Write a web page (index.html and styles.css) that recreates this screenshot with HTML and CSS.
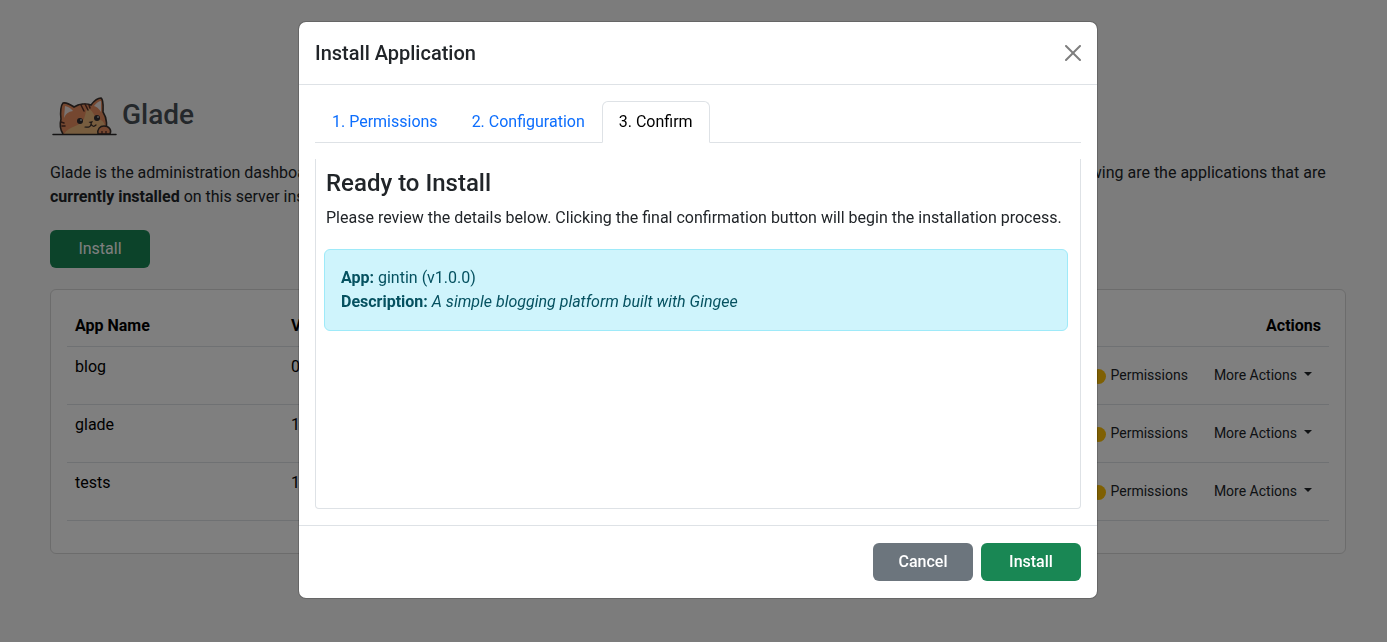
FILE: index.html
```html
<!DOCTYPE html>
<html lang="en">
<head>
<meta charset="utf-8">
<meta name="viewport" content="width=device-width, initial-scale=1">
<title>Glade</title>
<link rel="stylesheet" href="styles.css">
</head>
<body>
<main class="page">
  <header class="brand">
    <svg class="brand-logo" viewBox="0 0 70 50" aria-hidden="true">
      <path d="M13 44C9 38 10 33 11 29C10 22 11 15 13 13C17 12 21 15 24 17C29 14 36 13 41 15C44 11 48 8 51 8C54 10 53 19 53 22C57 28 58 37 54 44Z" fill="#ea8f60"/>
      <path d="M14 44C20 35 30 37 34 29L37 18C40 18 44 23 46 29C53 29 57 34 54 44Z" fill="#efba7f"/>
      <path d="M14 28L15 16Q20 17 23 21Q16 22 14 28ZM44 16Q48 11 51 11L51 22Q48 17 44 16Z" fill="#f5e8e4"/>
      <path d="M13 44C9 38 10 33 11 29C10 22 11 15 13 13C17 12 21 15 24 17C29 14 36 13 41 15C44 11 48 8 51 8C54 10 53 19 53 22C57 28 58 37 54 44" fill="none" stroke="#3b302c" stroke-width="1.6"/>
      <path d="M31 15L34 21M35 14L38 20M39 15L40 18M11 32L14 33M12 36L15 36" fill="none" stroke="#583029" stroke-width="1.5" stroke-linecap="round"/>
      <circle cx="30" cy="31" r="3" fill="#302c30"/>
      <circle cx="47" cy="28" r="3" fill="#302c30"/>
      <circle cx="31" cy="30" r="1" fill="#aaa"/>
      <circle cx="48" cy="27" r="1" fill="#aaa"/>
      <path d="M38.500 32L43 31L41.500 34Z" fill="#3b302c"/>
      <path d="M41 34Q41 38 35 37M41 34Q43 38 46 35" fill="none" stroke="#3b302c" stroke-width="1.2" stroke-linecap="round"/>
      <path d="M48 44C47 39 50 36 54 36C59 36 62 40 60 44Z" fill="#ea8f60" stroke="#3b302c" stroke-width="1.5"/>
      <path d="M52 44V41M56 44V41" stroke="#58302a" stroke-width="1.3"/>
      <path d="M3 44.500H66" stroke="#2b292a" stroke-width="1.5" stroke-linecap="round"/>
    </svg>
    <h1 class="brand-name">Glade</h1>
  </header>
  <p class="intro">Glade is the administration dashboard for the Gingee application server. You can use it to easily install, upgrade and manage applications. The following are the applications that are <strong>currently installed</strong> on this server instance.</p>
  <button class="btn btn-success btn-page" type="button">Install</button>
  <section class="card">
    <table class="apps">
      <thead>
        <tr><th class="col-name" scope="col">App Name</th><th scope="col">Version</th><th class="col-actions" scope="col">Actions</th></tr>
      </thead>
      <tbody>
        <tr><td>blog</td><td>0.0.1</td><td><div class="actions"><button class="btn-sm" type="button"><span class="dot"></span>Permissions</button><button class="btn-sm" type="button">More Actions<span class="caret"></span></button></div></td></tr>
        <tr><td>glade</td><td>1.0.0</td><td><div class="actions"><button class="btn-sm" type="button"><span class="dot"></span>Permissions</button><button class="btn-sm" type="button">More Actions<span class="caret"></span></button></div></td></tr>
        <tr><td>tests</td><td>1.0.0</td><td><div class="actions"><button class="btn-sm" type="button"><span class="dot"></span>Permissions</button><button class="btn-sm" type="button">More Actions<span class="caret"></span></button></div></td></tr>
      </tbody>
    </table>
  </section>
</main>
<div class="backdrop">
  <div class="modal" role="dialog" aria-modal="true" aria-labelledby="modal-title">
    <div class="modal-header">
      <h2 class="modal-title" id="modal-title">Install Application</h2>
      <button class="close" type="button" aria-label="Close">
        <svg class="close-icon" viewBox="0 0 16 16" aria-hidden="true"><path d="M.293.293a1 1 0 0 1 1.414 0L8 6.586 14.293.293a1 1 0 1 1 1.414 1.414L9.414 8l6.293 6.293a1 1 0 0 1-1.414 1.414L8 9.414l-6.293 6.293a1 1 0 0 1-1.414-1.414L6.586 8 .293 1.707a1 1 0 0 1 0-1.414z"/></svg>
      </button>
    </div>
    <div class="modal-body">
      <div class="tabs" role="tablist">
        <button class="tab" type="button" role="tab" aria-selected="false">1. Permissions</button>
        <button class="tab" type="button" role="tab" aria-selected="false">2. Configuration</button>
        <button class="tab tab-active" type="button" role="tab" aria-selected="true">3. Confirm</button>
      </div>
      <div class="panel" role="tabpanel">
        <h3 class="panel-title">Ready to Install</h3>
        <p class="panel-text">Please review the details below. Clicking the final confirmation button will begin the installation process.</p>
        <div class="alert"><strong>App:</strong> gintin (v1.0.0)<br><strong>Description:</strong> <em>A simple blogging platform built with Gingee</em></div>
      </div>
    </div>
    <div class="modal-footer">
      <button class="btn btn-secondary" type="button">Cancel</button>
      <button class="btn btn-success" type="button">Install</button>
    </div>
  </div>
</div>
</body>
</html>
```
FILE: styles.css
```css
*, *::before, *::after { box-sizing: border-box; }

body {
  margin: 0;
  min-height: 100vh;
  background: #f8f8f8;
  color: #212529;
  font-family: Roboto, "Liberation Sans", sans-serif;
  font-size: 16px;
  line-height: 24px;
}

h1, h2, h3, p { margin: 0; }
button { font-family: inherit; cursor: pointer; }
strong { font-weight: 700; }

.page { padding: 90px 41px 32px 50px; }

.brand { display: flex; align-items: center; gap: 2px; }
.brand-logo { width: 70px; height: 50px; }
.brand-name { color: #495057; font-size: 28px; line-height: 34px; font-weight: 500; }

.intro { margin: 21px 0; }

.btn {
  min-width: 100px;
  height: 38px;
  padding: 0 12px;
  border: 0;
  border-radius: 6px;
  color: #fff;
  font-size: 16px;
  line-height: 24px;
  font-weight: 500;
}
.btn-success { background: #198754; }
.btn-secondary { background: #6c757d; }
.btn-page { display: block; font-weight: 400; }

.card {
  margin-top: 21px;
  padding: 16px;
  background: #fff;
  border: 1px solid #d9d9d9;
  border-radius: 6px;
}

.apps {
  width: 100%;
  margin-bottom: 16px;
  border-collapse: separate;
  border-spacing: 0;
  color: #000;
}
.apps th, .apps td {
  padding: 8px;
  border-bottom: 1px solid #dee2e6;
  text-align: left;
  vertical-align: top;
}
.apps th { font-weight: 700; }
.apps .col-name { width: 216px; }
.apps .col-actions { text-align: right; }

.actions { display: flex; justify-content: flex-end; gap: 8px; padding: 5px 0; }
.btn-sm {
  display: flex;
  align-items: center;
  gap: 5px;
  padding: 4px 8px;
  border: 1px solid transparent;
  border-radius: 4px;
  background: transparent;
  color: #212529;
  font-size: 14px;
  line-height: 21px;
}
.dot { width: 15px; height: 15px; margin-top: 2px; border-radius: 50%; background: #ffc107; }
.caret {
  margin: 0 0 4px 2px;
  border-top: 4px solid;
  border-right: 4px solid transparent;
  border-left: 4px solid transparent;
}

.backdrop {
  position: fixed;
  inset: 0;
  display: flex;
  justify-content: center;
  align-items: flex-start;
  padding: 21px 0 21px 9px;
  background: rgba(0, 0, 0, 0.5);
}

.modal {
  width: 100%;
  max-width: 800px;
  border: 1px solid rgba(0, 0, 0, 0.175);
  border-radius: 8px;
  background: #fff;
  background-clip: padding-box;
}

.modal-header {
  display: flex;
  align-items: center;
  justify-content: space-between;
  padding: 16px;
  border-bottom: 1px solid #dee2e6;
}
.modal-title { font-size: 20px; line-height: 30px; font-weight: 500; }
.close { display: flex; padding: 0; border: 0; background: transparent; opacity: 0.5; }
.close-icon { width: 16px; height: 16px; }

.modal-body { padding: 16px; }

.tabs { display: flex; border-bottom: 1px solid #dee2e6; }
.tab {
  margin-bottom: -1px;
  padding: 8px 16px;
  border: 1px solid transparent;
  border-radius: 6px 6px 0 0;
  background: transparent;
  color: #0d6efd;
  font-size: 16px;
  line-height: 24px;
}
.tab-active { border-color: #dee2e6 #dee2e6 #fff; background: #fff; color: #000; }

.panel {
  min-height: 350px;
  margin-top: 16px;
  padding: 9px 12px 8px 8px;
  border: 1px solid #dee2e6;
  border-top: 0;
  border-radius: 0 0 4px 4px;
}
.panel-title { padding: 0 2px; font-size: 24px; line-height: 30px; font-weight: 500; }
.panel-text { padding: 8px 2px 19px; }
.alert {
  padding: 16px;
  border: 1px solid #9eeaf9;
  border-radius: 6px;
  background: #cff4fc;
  color: #055160;
}

.modal-footer {
  display: flex;
  justify-content: flex-end;
  gap: 8px;
  padding: 17px 16px;
  border-top: 1px solid #dee2e6;
}
```
